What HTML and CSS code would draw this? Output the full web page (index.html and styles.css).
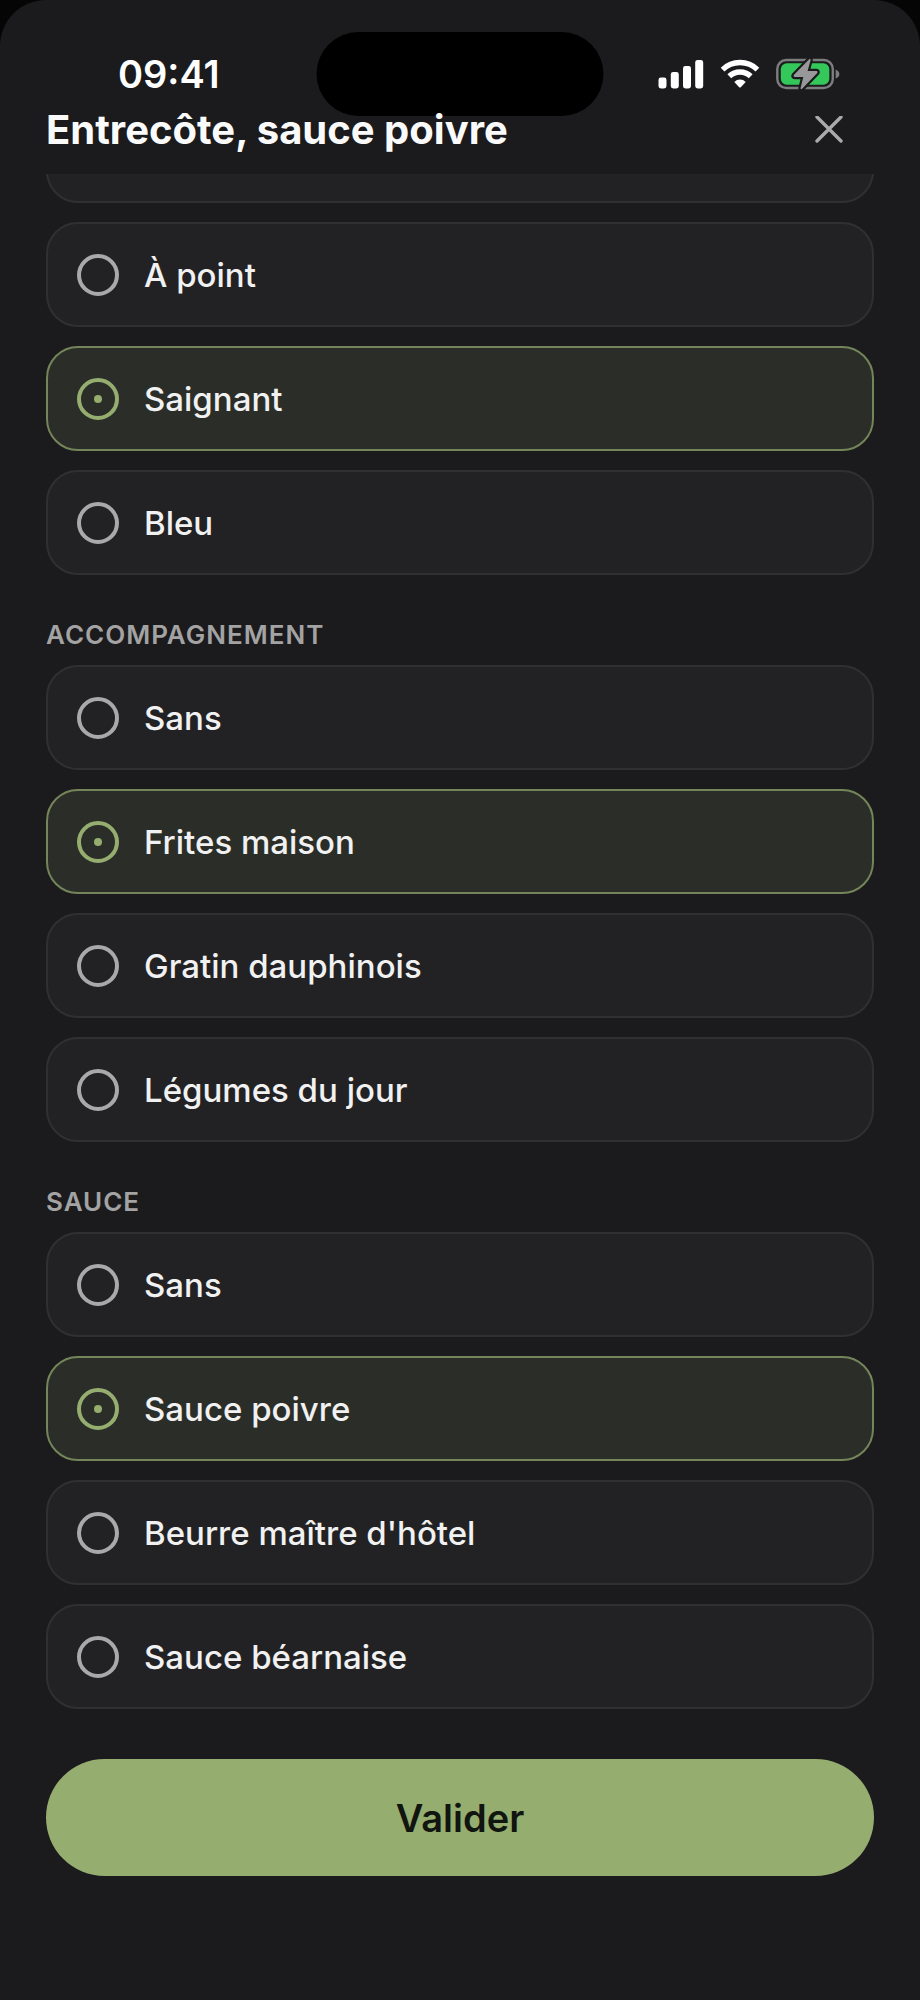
FILE: index.html
```
<!DOCTYPE html>
<html lang="fr">
<head>
  <meta charset="UTF-8" />
  <meta name="viewport" content="width=device-width, initial-scale=1" />
  <title>Entrecôte, sauce poivre</title>
  <link rel="stylesheet" href="styles.css">
</head>
<body>

<div class="sheet">
  <header>
    <div class="status-bar">
      <span class="time">09:41</span>
      <div class="status-icons">
        <svg class="signal" width="46" height="30" viewBox="0 0 46 30" fill="#fff" aria-hidden="true">
          <rect x="0.5" y="18.5" width="8" height="11" rx="2.4" />
          <rect x="12.8" y="13" width="8" height="16.5" rx="2.4" />
          <rect x="25" y="7" width="8" height="22.5" rx="2.4" />
          <rect x="37.2" y="1" width="8" height="28.5" rx="2.4" />
        </svg>
        <svg class="wifi" width="40" height="30" viewBox="0 0 40 30" aria-hidden="true">
          <g fill="none" stroke="#fff" stroke-width="5.4">
            <path d="M2.6 10.6A25 25 0 0 1 37.4 10.6" />
            <path d="M9.3 17.3A15.4 15.4 0 0 1 30.7 17.3" />
          </g>
          <path fill="#fff" d="M14.3 22.9A8.2 8.2 0 0 1 25.7 22.9L20.8 28.2Q20 29 19.2 28.2Z" />
        </svg>
        <svg class="battery" width="64" height="32" viewBox="0 0 64 32" aria-hidden="true">
          <rect x="1.3" y="2" width="55.5" height="28" rx="9" fill="none" stroke="#7d7d7f" stroke-width="2.4" />
          <path fill="#7d7d7f" d="M59.6 11.4Q63.4 13 63.4 16T59.6 20.6Z" />
          <rect x="4.8" y="5.2" width="48.5" height="21.6" rx="6" fill="#34c759" />
          <path fill="#98989a" stroke="#1b1b1d" stroke-width="4.4" stroke-linejoin="round" paint-order="stroke" d="M33.2 1.2 17.8 17.1Q16.8 18.8 18.8 19H27.3L24.5 30.2Q24.8 32 26.4 30.6L41.3 14.9Q42.2 13.2 40.4 13H31.6L34.6 2.2Q34.6 .2 33.2 1.2Z" />
        </svg>
      </div>
      <div class="island"></div>
    </div>
    <div class="title-row">
      <h1>Entrecôte, sauce poivre</h1>
      <button type="button" class="close" aria-label="Fermer">
        <svg width="28" height="28" viewBox="0 0 28 28" fill="none" stroke="#aaaaac" stroke-width="3.4" stroke-linecap="round"><path d="M2 1 26 25M26 1 2 25" /></svg>
      </button>
    </div>
  </header>

  <form class="content">
    <fieldset class="group scrolled">
      <div class="option"></div>
      <label class="option"><input type="radio" name="cuisson"> À point</label>
      <label class="option"><input type="radio" name="cuisson" checked> Saignant</label>
      <label class="option"><input type="radio" name="cuisson"> Bleu</label>
    </fieldset>

    <h2 id="accompagnement">Accompagnement</h2>
    <fieldset class="group" aria-labelledby="accompagnement">
      <label class="option"><input type="radio" name="accompagnement"> Sans</label>
      <label class="option"><input type="radio" name="accompagnement" checked> Frites maison</label>
      <label class="option"><input type="radio" name="accompagnement"> Gratin dauphinois</label>
      <label class="option"><input type="radio" name="accompagnement"> Légumes du jour</label>
    </fieldset>

    <h2 id="sauce">Sauce</h2>
    <fieldset class="group" aria-labelledby="sauce">
      <label class="option"><input type="radio" name="sauce"> Sans</label>
      <label class="option"><input type="radio" name="sauce" checked> Sauce poivre</label>
      <label class="option"><input type="radio" name="sauce"> Beurre maître d'hôtel</label>
      <label class="option"><input type="radio" name="sauce"> Sauce béarnaise</label>
    </fieldset>

    <button type="button" class="submit">Valider</button>
  </form>
</div>

</body>
</html>
```

FILE: styles.css
```
* { margin: 0; padding: 0; box-sizing: border-box; }
body { background: #050506; color: #f1f1f1; font-family: Inter, "Open Sans", sans-serif; }
button { border: none; background: none; font-family: inherit; cursor: pointer; }
svg { display: block; }

.sheet { min-height: 100vh; background: #1b1b1d; border-radius: 46px 46px 0 0; overflow: hidden; }

header { padding-bottom: 20px; }
.status-bar { position: relative; display: flex; justify-content: space-between; align-items: center; padding: 42px 80px 0 118px; height: 106px; }
.time { font-size: 38px; line-height: 64px; font-weight: 600; color: #fff; }
.status-icons { display: flex; align-items: center; gap: 16px; }
.island { position: absolute; top: 32px; left: 50%; width: 287px; height: 84px; border-radius: 42px; background: #000; transform: translateX(-50%); }

/* keeps the title above the island */
.title-row { position: relative; display: flex; justify-content: space-between; align-items: center; padding: 0 67px 0 46px; }
h1 { font-size: 40px; line-height: 48px; font-weight: 700; color: #fafafa; }
.close { display: flex; justify-content: center; align-items: center; width: 48px; height: 48px; }

.content { padding: 0 46px 48px; overflow: hidden; }
.group { display: flex; flex-direction: column; gap: 19px; border: none; }
/* the first card is partly scrolled under the header */
.scrolled { margin-top: -76px; }
h2 { padding: 43px 0 13px; font-size: 26px; line-height: 34px; font-weight: 600; letter-spacing: 1px; text-transform: uppercase; color: #a3a3a4; }

.option { display: flex; align-items: center; gap: 25px; height: 105px; padding: 0 29px; border: 2px solid #303032; border-radius: 32px; background: #222224; font-size: 33px; line-height: 40px; font-weight: 500; }
.option:has(input:checked) { background: #2b2e28; border-color: #74855a; }
.option input { appearance: none; display: grid; place-items: center; flex: none; width: 42px; height: 42px; border: 4px solid #a9a9aa; border-radius: 50%; }
.option input:checked { border-color: #96ad70; }
.option input:checked::before { content: ""; width: 8px; height: 8px; border-radius: 50%; background: #96ad70; }

.submit { display: block; width: 100%; height: 117px; margin-top: 50px; border-radius: 59px; background: #96ad70; color: #11150f; font-size: 38px; font-weight: 600; }
```
